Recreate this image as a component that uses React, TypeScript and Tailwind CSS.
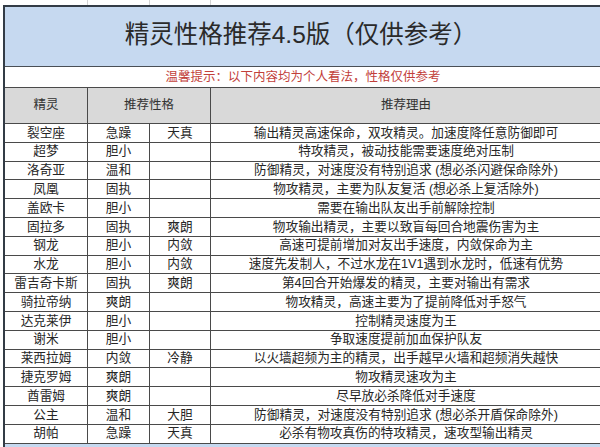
const rows: [string, string, string, string][] = [
  ['裂空座', '急躁', '天真', '输出精灵高速保命，双攻精灵。加速度降任意防御即可'],
  ['超梦', '胆小', '', '特攻精灵，被动技能需要速度绝对压制'],
  ['洛奇亚', '温和', '', '防御精灵，对速度没有特别追求 (想必杀闪避保命除外)'],
  ['凤凰', '固执', '', '物攻精灵，主要为队友复活 (想必杀上复活除外)'],
  ['盖欧卡', '胆小', '', '需要在输出队友出手前解除控制'],
  ['固拉多', '固执', '爽朗', '物攻输出精灵，主要以致盲每回合地震伤害为主'],
  ['钢龙', '胆小', '内敛', '高速可提前增加对友出手速度，内敛保命为主'],
  ['水龙', '胆小', '内敛', '速度先发制人，不过水龙在1V1遇到水龙时，低速有优势'],
  ['雷吉奇卡斯', '固执', '爽朗', '第4回合开始爆发的精灵，主要对输出有需求'],
  ['骑拉帝纳', '爽朗', '', '物攻精灵，高速主要为了提前降低对手怒气'],
  ['达克莱伊', '胆小', '', '控制精灵速度为王'],
  ['谢米', '胆小', '', '争取速度提前加血保护队友'],
  ['莱西拉姆', '内敛', '冷静', '以火墙超频为主的精灵，出手越早火墙和超频消失越快'],
  ['捷克罗姆', '爽朗', '', '物攻精灵速攻为主'],
  ['酋雷姆', '爽朗', '', '尽早放必杀降低对手速度'],
  ['公主', '温和', '大胆', '防御精灵，对速度没有特别追求 (想必杀开盾保命除外)'],
  ['胡帕', '急躁', '天真', '必杀有物攻真伤的特攻精灵，速攻型输出精灵'],
]

export default function App() {
  return (
    <div
      className="w-[600px] h-[447px] overflow-hidden bg-white text-[#262626]"
      style={{ fontFamily: '"Liberation Sans", "Noto Sans CJK SC", sans-serif' }}
    >
      {/* spreadsheet gridlines above the table */}
      <div className="flex h-[5px]">
        <div className="w-[88px] border-r border-[#d4d4d4]" />
        <div className="w-[62px] border-r border-[#d4d4d4]" />
        <div className="w-[61px] border-r border-[#d4d4d4]" />
        <div className="flex-1" />
      </div>

      <div className="ml-[3px] w-[620px] border-l-2 border-t-2 border-[#333c46]">
        {/* title */}
        <div className="flex h-[60px] items-center justify-center border-b border-[#4a4f55] bg-[#c6d9f0] pr-[26px] pb-[2px] text-[24.5px] text-[#2a2a2a]">
          精灵性格推荐4.5版（仅供参考）
        </div>

        {/* notice */}
        <div className="flex h-[21px] items-center justify-center border-b border-[#4a4a4a] bg-white pr-[22px] text-[12.5px] text-[#c2403a]">
          温馨提示：以下内容均为个人看法，性格仅供参考
        </div>

        {/* header */}
        <div className="flex h-[36px] border-b border-[#4a4a4a] bg-[#d9d9d9] text-[12.5px] text-[#333]">
          <div className="flex w-[83px] items-center justify-center border-r border-[#4a4a4a]">精灵</div>
          <div className="flex w-[123px] items-center justify-center border-r border-[#4a4a4a]">推荐性格</div>
          <div className="flex w-[390px] items-center justify-center">推荐理由</div>
        </div>

        {/* data rows */}
        {rows.map(([name, p1, p2, reason]) => (
          <div key={name} className="flex h-[18.8px] border-b border-[#4a4a4a] text-[12.7px] leading-none">
            <div className="flex w-[83px] items-center justify-center border-r border-[#4a4a4a]">{name}</div>
            <div className="flex w-[62px] items-center justify-center border-r border-[#4a4a4a]">{p1}</div>
            <div className="flex w-[61px] items-center justify-center border-r border-[#4a4a4a]">{p2}</div>
            <div className="flex w-[390px] items-center justify-center whitespace-nowrap">{reason}</div>
          </div>
        ))}

        <div className="h-[10px] bg-[#c6d9f0]" />
      </div>
    </div>
  )
}
